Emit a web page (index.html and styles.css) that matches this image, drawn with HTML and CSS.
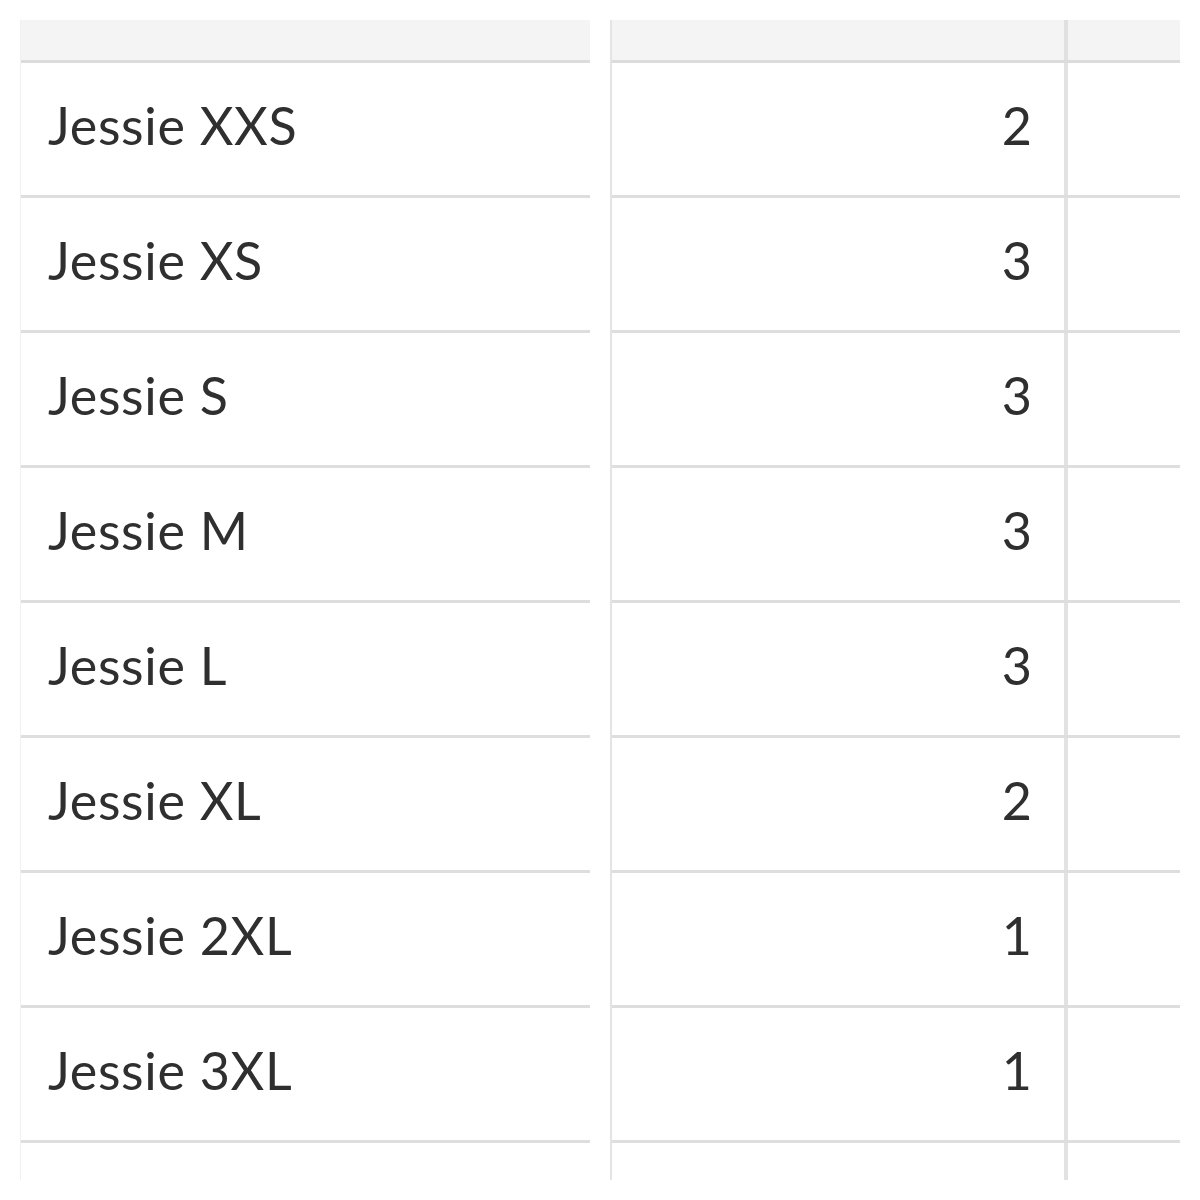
FILE: index.html
```html
<!DOCTYPE html>
<html>
<head>
<meta charset="utf-8">
<link rel="stylesheet" href="styles.css">
</head>
<body>
<div class="page">
  <div class="panel names">
    <div class="head"></div>
    <div class="row"><span class="name">Jessie XXS</span></div>
    <div class="row"><span class="name">Jessie XS</span></div>
    <div class="row"><span class="name">Jessie S</span></div>
    <div class="row"><span class="name">Jessie M</span></div>
    <div class="row"><span class="name">Jessie L</span></div>
    <div class="row"><span class="name">Jessie XL</span></div>
    <div class="row"><span class="name">Jessie 2XL</span></div>
    <div class="row"><span class="name">Jessie 3XL</span></div>
    <div class="row tail"></div>
  </div>
  <div class="panel counts">
    <div class="head"><div class="c1"></div><div class="c2"></div></div>
    <div class="row"><div class="c1">2</div><div class="c2"></div></div>
    <div class="row"><div class="c1">3</div><div class="c2"></div></div>
    <div class="row"><div class="c1">3</div><div class="c2"></div></div>
    <div class="row"><div class="c1">3</div><div class="c2"></div></div>
    <div class="row"><div class="c1">3</div><div class="c2"></div></div>
    <div class="row"><div class="c1">2</div><div class="c2"></div></div>
    <div class="row"><div class="c1">1</div><div class="c2"></div></div>
    <div class="row"><div class="c1">1</div><div class="c2"></div></div>
    <div class="row tail"><div class="c1"></div><div class="c2"></div></div>
  </div>
</div>
</body>
</html>
```
FILE: styles.css
```css
html, body {
  margin: 0;
  padding: 0;
  background: #ffffff;
}
body {
  font-family: Lato, "Open Sans", sans-serif;
  color: #2f2f2f;
}
.page {
  display: flex;
  gap: 20px;
  padding: 20px 20px 0 20px;
  height: 1180px;
  box-sizing: border-box;
}
.panel {
  display: flex;
  flex-direction: column;
  width: 570px;
  height: 1160px;
  overflow: hidden;
}
.names {
  border-left: 1px solid #f0f0f0;
  box-sizing: border-box;
}
.counts {
  border-left: 2px solid #e4e4e4;
  box-sizing: border-box;
}
.head {
  height: 40px;
  flex: none;
  background: #f4f4f4;
  border-bottom: 3px solid #dcdcdc;
}
.row {
  height: 132px;
  flex: none;
  border-bottom: 3px solid #dedede;
  display: flex;
  align-items: center;
}
.row.tail {
  border-bottom: none;
  flex: 1;
}
.name {
  padding-left: 27px;
  font-size: 52px;
  line-height: 1;
  letter-spacing: 0.7px;
  position: relative;
  top: -4px;
}
.counts .head,
.counts .row {
  display: flex;
  align-items: stretch;
}
.c1 {
  width: 456px;
  flex: none;
  border-right: 4px solid #e2e2e2;
  display: flex;
  align-items: center;
  justify-content: flex-end;
  padding-right: 32px;
  box-sizing: border-box;
  font-size: 52px;
  line-height: 1;
  padding-bottom: 8px;
}
.head .c1 {
  border-right-color: #e0e0e0;
}
.c2 {
  flex: 1;
}
```
